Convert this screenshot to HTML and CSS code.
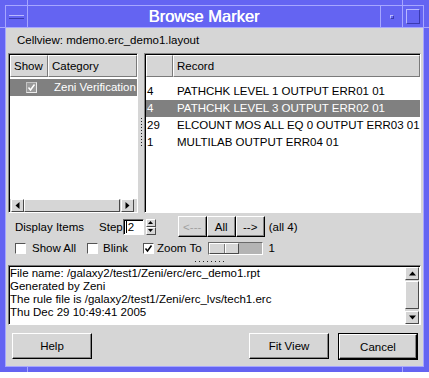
FILE: index.html
```html
<!DOCTYPE html>
<html>
  <head>
    <meta charset="utf-8">
    <title>Browse Marker</title>
    <link rel="stylesheet" href="styles.css">
  </head>
  <body>
    <div class="window">
      <span class="tick-v"></span>
      <span class="tick-h"></span>

      <div class="titlebar">
        <div class="wbtn minbtn"><span class="minbar"></span></div>
        <div class="title">Browse Marker</div>
        <div class="wbtn menubtn"><span class="menudot"></span></div>
        <div class="wbtn maxbtn"><span class="maxsq"></span></div>
      </div>

      <div class="client">
        <div class="cellview">Cellview: mdemo.erc_demo1.layout</div>

        <div class="panes">
          <!-- category list -->
          <div class="pane catpane">
            <div class="head">
              <div class="hcell showcol">Show</div>
              <div class="hcell catcol">Category</div>
            </div>
            <div class="catrows">
              <div class="row sel">
                <div class="showcol cbcell">
                  <span class="chk inv"><svg width="9" height="9" viewBox="0 0 9 9"><path d="M1.5 4.5 L3.5 7 L7.5 1.5" fill="none" stroke="#fff" stroke-width="1.5"/></svg></span>
                </div>
                <div class="catcol">Zeni Verification</div>
              </div>
            </div>
            <div class="hscroll">
              <div class="arr"><svg width="5" height="7" viewBox="0 0 5 7"><polygon points="4.5,0 4.5,7 0.5,3.5"/></svg></div>
              <div class="trough"><div class="thumb"></div></div>
              <div class="arr"><svg width="5" height="7" viewBox="0 0 5 7"><polygon points="0.5,0 0.5,7 4.5,3.5"/></svg></div>
            </div>
          </div>

          <div class="vsash"><span class="grip-v"></span></div>

          <!-- record list -->
          <div class="pane recpane">
            <div class="head">
              <div class="hcell numcol"></div>
              <div class="hcell reccol">Record</div>
            </div>
            <div class="recrows">
              <div class="row"><div class="numcol">4</div><div class="reccol">PATHCHK LEVEL 1 OUTPUT ERR01 01</div></div>
              <div class="row sel"><div class="numcol">4</div><div class="reccol">PATHCHK LEVEL 3 OUTPUT ERR02 01</div></div>
              <div class="row"><div class="numcol">29</div><div class="reccol">ELCOUNT MOS ALL EQ 0 OUTPUT ERR03 01</div></div>
              <div class="row"><div class="numcol">1</div><div class="reccol">MULTILAB OUTPUT ERR04 01</div></div>
            </div>
          </div>
        </div>

        <div class="controls">
          <div class="ctlrow toprow">
            <span class="lbl display">Display Items</span>
            <span class="lbl step">Step</span>
            <span class="spin">
              <span class="spinval"><span class="caret"></span>2</span>
              <span class="spinbtns">
                <span class="spinbtn"><svg width="5" height="3" viewBox="0 0 5 3"><polygon points="0,3 5,3 2.5,0"/></svg></span>
                <span class="spinbtn"><svg width="5" height="3" viewBox="0 0 5 3"><polygon points="0,0 5,0 2.5,3"/></svg></span>
              </span>
            </span>
            <span class="navbtns">
              <button class="btn nav dis">&lt;---</button>
              <button class="btn nav">All</button>
              <button class="btn nav">--&gt;</button>
            </span>
            <span class="lbl count">(all 4)</span>
          </div>
          <div class="ctlrow botrow">
            <span class="cb first"><span class="chk"></span>Show All</span>
            <span class="cb"><span class="chk"></span>Blink</span>
            <span class="cb zoom"><span class="chk"><svg width="9" height="9" viewBox="0 0 9 9"><path d="M1.5 4.5 L3.5 7 L7.5 1.5" fill="none" stroke="#000" stroke-width="1.5"/></svg></span>Zoom To</span>
            <span class="slider"><span class="sthumb"></span></span>
            <span class="lbl sval">1</span>
          </div>
        </div>

        <div class="hsash"><span class="grip-h"></span></div>

        <div class="log">
          <div class="logtext">
            <div>File name: /galaxy2/test1/Zeni/erc/erc_demo1.rpt</div>
            <div>Generated by Zeni</div>
            <div>The rule file is /galaxy2/test1/Zeni/erc_lvs/tech1.erc</div>
            <div>Thu Dec 29 10:49:41 2005</div>
          </div>
          <div class="vscroll">
            <div class="arr"><svg width="7" height="5" viewBox="0 0 7 5"><polygon points="0,4.5 7,4.5 3.5,0.5"/></svg></div>
            <div class="vthumb"></div>
            <div class="arr down"><svg width="7" height="5" viewBox="0 0 7 5"><polygon points="0,0.5 7,0.5 3.5,4.5"/></svg></div>
          </div>
        </div>

        <div class="actions">
          <button class="btn act">Help</button>
          <button class="btn act fit">Fit View</button>
          <span class="defbtn"><button class="btn act">Cancel</button></span>
        </div>
      </div>
    </div>
  </body>
</html>
```

FILE: styles.css
```css
body      {margin:0; background:#fff; color:#000;
           font-family:"Liberation Sans", Arial, Helvetica, sans-serif; font-size:11.5px;}

/* window frame */
.window   {width:429px; height:372px; box-sizing:border-box; padding:5px; background:#6464f2;
           display:flex; flex-direction:column; position:relative;}
.tick-v   {position:absolute; left:27px; top:0; width:1px; height:5px; background:#a6a6ff;
           box-shadow:375px 0 #a6a6ff, 0 367px #a6a6ff, 375px 367px #a6a6ff;}
.tick-h   {position:absolute; left:0; top:27px; width:5px; height:1px; background:#a6a6ff;
           box-shadow:424px 0 #a6a6ff;}

.titlebar {height:23px; flex:none; box-sizing:border-box; border:1px solid #a6a6ff; display:flex;}
.wbtn     {width:21px; flex:none; display:flex; align-items:center; justify-content:center;}
.minbtn   {border-right:1px solid #a6a6ff;}
.menubtn  {border-left:1px solid #a6a6ff;}
.maxbtn   {border-left:1px solid #a6a6ff; width:20px;}
.title    {flex:1; text-align:center; color:#fff; font-size:16.5px; line-height:21px;
           text-shadow:0.4px 0 0 #fff;}
.minbar   {width:15px; height:4px; box-sizing:border-box; border-top:1px solid #b8b8ff; border-bottom:1px solid #3a3ab0;}
.menudot  {width:4px; height:4px; box-sizing:border-box; border:1px solid; border-color:#b8b8ff #3a3ab0 #3a3ab0 #b8b8ff;}
.maxsq    {width:14px; height:15px; box-sizing:border-box; border:1px solid; border-color:#b8b8ff #3a3ab0 #3a3ab0 #b8b8ff;}

/* client area */
.client   {flex:1; background:#d6d6d6; border:1px solid #a6a6ff; border-top:none;
           padding:0 2px 0 2px; display:flex; flex-direction:column;}
.cellview {height:25px; flex:none; line-height:25px; padding-left:9px;}

.panes    {height:160px; flex:none; display:flex;}
.pane     {box-sizing:border-box; border:1px solid; border-color:#868686 #fff #fff #868686;
           padding:1px 0 0 1px; box-shadow:inset 1px 1px 0 #000; background:#fff;
           display:flex; flex-direction:column; overflow:hidden;}
.catpane  {width:130px; flex:none;}
.recpane  {flex:1;}

.head     {display:flex; height:22px; flex:none;}
.hcell    {box-sizing:border-box; height:22px; border:1px solid; border-color:#fff #7a7a7a #7a7a7a #fff;
           background:#d6d6d6; line-height:20px; padding-left:3px; white-space:nowrap;}
.showcol  {width:38px; flex:none; box-sizing:border-box;}
.catcol   {flex:1;}
.numcol   {width:27px; flex:none; box-sizing:border-box;}
.reccol   {flex:1;}

.row      {height:17px; line-height:17px; display:flex; white-space:nowrap; overflow:hidden;}
.row.sel  {background:#808080; color:#fff;}
.catrows  {margin-top:2px;}
.catrows .catcol {padding-left:6px;}
.cbcell   {padding-left:16px; display:flex; align-items:center;}
.recrows  {margin-top:6px;}
.recrows .numcol {padding-left:1px;}
.recrows .reccol {padding-left:4px;}

/* scrollbars */
.hscroll  {margin-top:auto; height:13px; flex:none; display:flex; background:#d6d6d6; padding:0 3px 0 1px;}
.arr      {width:13px; height:13px; flex:none; box-sizing:border-box; border:1px solid;
           border-color:#fff #4a4a4a #4a4a4a #fff; background:#d6d6d6;
           display:flex; align-items:center; justify-content:center;}
.trough   {flex:1;}
.thumb    {width:96px; height:13px; box-sizing:border-box; border:1px solid; border-color:#fff #4a4a4a #4a4a4a #fff;}

.vsash    {width:6px; flex:none; display:flex; align-items:center; justify-content:center;}
.grip-v   {width:1px; height:30px; background:repeating-linear-gradient(to bottom, #222 0 1px, transparent 1px 3px);}
.hsash    {height:8px; flex:none; display:flex; justify-content:center; padding-top:4px; box-sizing:border-box;}
.grip-h   {width:30px; height:1px; margin-left:-9px; background:repeating-linear-gradient(to right, #222 0 1px, transparent 1px 4px);}

/* controls */
.controls {height:44px; flex:none;}
.ctlrow   {display:flex; align-items:center; white-space:nowrap;}
.toprow   {height:21px; margin-top:3px;}
.botrow   {height:18px; margin-top:2px;}
.display  {margin-left:7px;}
.step     {margin-left:15px;}
.spin     {display:flex;}
.spinval  {width:21px; height:16px; box-sizing:border-box; background:#fff; border:1px solid;
           border-color:#6a6a6a #fff #fff #6a6a6a; box-shadow:inset 1px 1px 0 #000;
           padding-left:2px; line-height:14px; display:flex; align-items:center;}
.caret    {width:1px; height:12px; background:#000; margin-right:1px;}
.spinbtns {display:flex; flex-direction:column; margin-left:2px;}
.spinbtn  {width:10px; height:8px; box-sizing:border-box; border:1px solid; border-color:#fff #4a4a4a #4a4a4a #fff;
           display:flex; align-items:center; justify-content:center;}
.navbtns  {display:flex; margin-left:22px;}
.count    {margin-left:4px;}

.btn      {font:inherit; color:#000; background:#d6d6d6; border:1px solid; border-color:#fff #000 #000 #fff;
           box-shadow:inset -1px -1px 0 #868686; padding:0; margin:0; text-align:center;}
.nav      {width:29px; height:21px;}
.nav.dis  {color:#a0a0a0;}

.chk      {width:11px; height:11px; flex:none; box-sizing:border-box; border:1px solid;
           border-color:#555 #fff #fff #555; background:#fff; display:inline-flex;
           align-items:center; justify-content:center;}
.chk.inv  {background:#9a9a9a; border-color:#c4c4c4 #ececec #ececec #c4c4c4;}
.cb       {display:flex; align-items:center; margin-left:11px;}
.cb .chk  {margin-right:5px;}
.cb.first {margin-left:7px;}
.cb.first .chk {margin-right:6px;}
.cb.zoom  {margin-left:15px;}
.cb.zoom .chk {margin-right:3px;}
.slider   {width:55px; height:13px; box-sizing:border-box; margin-left:6px; background:#b4b4b4;
           border:1px solid; border-color:#6a6a6a #fff #fff #6a6a6a; display:flex;}
.sthumb   {width:30px; height:11px; box-sizing:border-box; background:#d6d6d6; border:1px solid;
           border-color:#fff #4a4a4a #4a4a4a #fff;
           background-image:linear-gradient(to right, transparent 14px, #7a7a7a 14px 15px, #fff 15px 16px, transparent 16px);}
.sval     {margin-left:6px;}

/* log text */
.log      {height:60px; flex:none; box-sizing:border-box; border:1px solid; border-color:#777 #fff #fff #777;
           box-shadow:inset 1px 1px 0 #000; padding:1px 1px 0 1px; background:#fff; display:flex;}
.logtext  {flex:1; line-height:13px; white-space:nowrap; overflow:hidden;}
.vscroll  {width:14px; flex:none; background:#d6d6d6; display:flex; flex-direction:column;}
.vscroll .arr {width:14px;}
.vthumb   {height:28px; margin-top:1px; box-sizing:border-box; border:1px solid; border-color:#fff #4a4a4a #4a4a4a #fff;}
.vscroll .down {margin-top:auto;}

/* bottom buttons */
.actions  {flex:1; display:flex; align-items:flex-start; padding:8px 3px 0 4px;}
.act      {width:80px; height:26px;}
.fit      {margin-left:auto;}
.defbtn   {margin-left:9px; border:1px solid #000; display:flex;}
.defbtn .act {width:78px; height:25px;}
```
